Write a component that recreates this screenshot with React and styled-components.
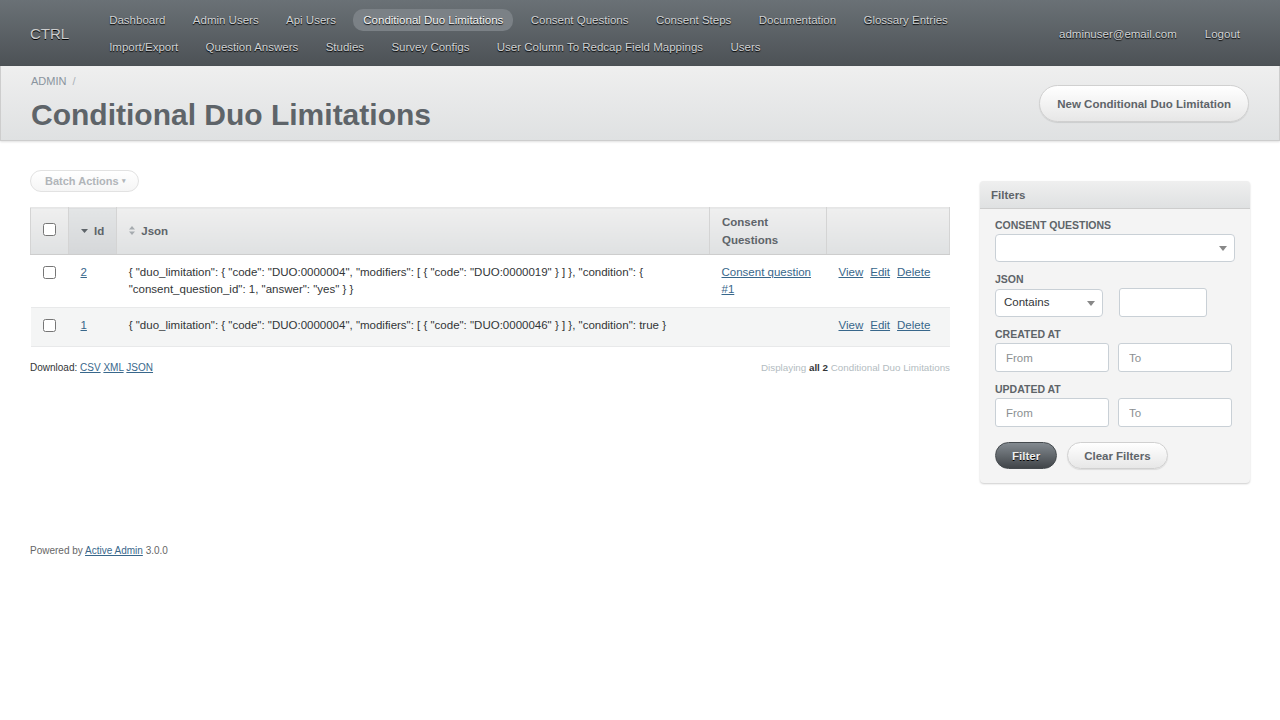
import React from 'react';
import styled, { createGlobalStyle } from 'styled-components';

const GlobalStyle = createGlobalStyle`
  html, body {
    margin: 0;
    padding: 0;
    background: #fff;
  }
  body {
    font-family: "Liberation Sans", Arial, sans-serif;
    font-size: 11.5px;
    color: #323537;
    line-height: 150%;
  }
  * { box-sizing: border-box; }
  a { color: #38678b; }
`;

const topRow = ['Dashboard', 'Admin Users', 'Api Users', 'Conditional Duo Limitations', 'Consent Questions', 'Consent Steps', 'Documentation', 'Glossary Entries'];
const bottomRow = ['Import/Export', 'Question Answers', 'Studies', 'Survey Configs', 'User Column To Redcap Field Mappings', 'Users'];

const rows = [
  {
    id: 2,
    json: '{ "duo_limitation": { "code": "DUO:0000004", "modifiers": [ { "code": "DUO:0000019" } ] }, "condition": { "consent_question_id": 1, "answer": "yes" } }',
    question: 'Consent question #1',
  },
  {
    id: 1,
    json: '{ "duo_limitation": { "code": "DUO:0000004", "modifiers": [ { "code": "DUO:0000046" } ] }, "condition": true }',
    question: null,
  },
];

export default function App() {
  return (
    <>
      <GlobalStyle />
      <Header>
        <SiteTitle>CTRL</SiteTitle>
        <Tabs>
          <TabRow>
            {topRow.map(t => (
              <Tab key={t} $current={t === 'Conditional Duo Limitations'}>{t}</Tab>
            ))}
          </TabRow>
          <TabRow>
            {bottomRow.map(t => <Tab key={t}>{t}</Tab>)}
          </TabRow>
        </Tabs>
        <UtilityNav>
          <Tab>adminuser@email.com</Tab>
          <Tab>Logout</Tab>
        </UtilityNav>
      </Header>

      <TitleBar>
        <TitleLeft>
          <Breadcrumb>ADMIN <Sep>/</Sep></Breadcrumb>
          <PageTitle>Conditional Duo Limitations</PageTitle>
        </TitleLeft>
        <ActionButton>New Conditional Duo Limitation</ActionButton>
      </TitleBar>

      <Main>
        <Content>
          <BatchButton>Batch Actions <Caret>▾</Caret></BatchButton>
          <Table>
            <thead>
              <tr>
                <Th $w="38px"><Check type="checkbox" /></Th>
                <Th $w="48px" $sorted><SortDown />Id</Th>
                <Th><SortBoth />Json</Th>
                <Th $w="117px" $wrap>Consent Questions</Th>
                <Th $w="123px"></Th>
              </tr>
            </thead>
            <tbody>
              {rows.map((r, i) => (
                <Tr key={r.id} $odd={i % 2 === 1}>
                  <Td><Check type="checkbox" /></Td>
                  <Td><a href="#">{r.id}</a></Td>
                  <Td>{r.json}</Td>
                  <Td>{r.question && <a href="#">{r.question}</a>}</Td>
                  <Td>
                    <Actions>
                      <a href="#">View</a>
                      <a href="#">Edit</a>
                      <a href="#">Delete</a>
                    </Actions>
                  </Td>
                </Tr>
              ))}
            </tbody>
          </Table>
          <IndexFooter>
            <Download>
              Download: <a href="#">CSV</a> <a href="#">XML</a> <a href="#">JSON</a>
            </Download>
            <Displaying>Displaying <b>all 2</b> Conditional Duo Limitations</Displaying>
          </IndexFooter>
        </Content>

        <Sidebar>
          <Panel>
            <PanelHeader>Filters</PanelHeader>
            <PanelBody>
              <Field>
                <Label>Consent Questions</Label>
                <Select $w="240px" $h="28px"><SelectArrow /></Select>
              </Field>
              <Field>
                <Label>Json</Label>
                <InlineRow $gap="16px">
                  <Select $w="108px" $h="28px" $down>Contains<SelectArrow /></Select>
                  <Input $w="88px" />
                </InlineRow>
              </Field>
              <Field>
                <Label>Created At</Label>
                <InlineRow $gap="9px">
                  <Input $w="114px" placeholder="From" />
                  <Input $w="114px" placeholder="To" />
                </InlineRow>
              </Field>
              <Field>
                <Label>Updated At</Label>
                <InlineRow $gap="9px">
                  <Input $w="114px" placeholder="From" />
                  <Input $w="114px" placeholder="To" />
                </InlineRow>
              </Field>
              <ButtonRow>
                <FilterButton>Filter</FilterButton>
                <ClearButton>Clear Filters</ClearButton>
              </ButtonRow>
            </PanelBody>
          </Panel>
        </Sidebar>
      </Main>

      <Footer>
        Powered by <a href="#">Active Admin</a> 3.0.0
      </Footer>
    </>
  );
}

const SortDown = () => (
  <SortIcon width="7" height="4" viewBox="0 0 7 4">
    <path d="M0 0 L7 0 L3.5 4 Z" fill="#5e6469" />
  </SortIcon>
);

const SortBoth = () => (
  <SortIcon width="6" height="9" viewBox="0 0 6 9">
    <path d="M0 3.5 L6 3.5 L3 0 Z" fill="#a6abaf" />
    <path d="M0 5.5 L6 5.5 L3 9 Z" fill="#a6abaf" />
  </SortIcon>
);

const SelectArrow = () => (
  <Arrow width="8" height="5" viewBox="0 0 8 5">
    <path d="M0 0 L8 0 L4 5 Z" fill="#888" />
  </Arrow>
);

const Header = styled.div`
  height: 66px;
  display: flex;
  align-items: center;
  padding: 2px 30px 0;
  background: linear-gradient(180deg, #6a7176 0%, #4d5256 100%);
  border-bottom: 1px solid #4c5155;
`;

const SiteTitle = styled.h1`
  margin: 0 30px 0 0;
  font-size: 15px;
  font-weight: normal;
  color: #cdcdcd;
  text-shadow: 0 1px 0 #000;
  line-height: 1;
`;

const Tabs = styled.div`
  flex: 1;
  display: flex;
  flex-direction: column;
  gap: 5px;
`;

const TabRow = styled.div`
  display: flex;
  gap: 7.4px;
`;

const Tab = styled.span`
  display: inline-block;
  height: 22px;
  line-height: 22px;
  padding: 0 10px;
  border-radius: 10px;
  text-shadow: 0 1px 1px #000;
  white-space: nowrap;
  background: ${p => (p.$current ? '#7b8186' : 'transparent')};
  color: ${p => (p.$current ? '#f4f4f4' : '#d0d2d4')};
`;

const UtilityNav = styled.div`
  display: flex;
  gap: 8px;
`;

const TitleBar = styled.div`
  height: 75px;
  display: flex;
  align-items: center;
  justify-content: space-between;
  padding: 0 30px;
  background: linear-gradient(180deg, #efefef 0%, #dfe1e2 100%);
  border-bottom: 1px solid #cdcdcd;
  border-left: 1px solid #cdcdcd;
  border-right: 1px solid #cdcdcd;
  box-shadow: 0 1px 2px rgba(0, 0, 0, 0.12);
`;

const TitleLeft = styled.div`
  display: flex;
  flex-direction: column;
  align-self: flex-start;
  padding-top: 8px;
`;

const Breadcrumb = styled.div`
  font-size: 11px;
  color: #8a949e;
  line-height: 14px;
`;

const Sep = styled.span`
  margin-left: 3px;
  color: #aab1b7;
`;

const PageTitle = styled.h2`
  margin: 9px 0 0;
  font-size: 30px;
  line-height: 36px;
  font-weight: bold;
  color: #5e6469;
`;

const ActionButton = styled.button`
  height: 37px;
  padding: 0 17px;
  border-radius: 200px;
  border: 1px solid #d0d0d0;
  background: linear-gradient(180deg, #ffffff 0%, #e7e7e7 100%);
  box-shadow: 0 1px 1px rgba(0, 0, 0, 0.1);
  font-family: inherit;
  font-size: 11.5px;
  font-weight: bold;
  color: #5e6469;
  margin-top: 1px;
`;

const Main = styled.div`
  display: flex;
  padding: 29px 30px 0;
  align-items: flex-start;
`;

const Content = styled.div`
  flex: 1;
  min-width: 0;
`;

const BatchButton = styled.button`
  height: 22px;
  padding: 0 12px 0 14px;
  border-radius: 200px;
  border: 1px solid #e2e2e2;
  background: linear-gradient(180deg, #ffffff 0%, #f5f5f5 100%);
  font-family: inherit;
  font-size: 11px;
  font-weight: bold;
  color: #b1b5b9;
  display: flex;
  align-items: center;
`;

const Caret = styled.span`
  font-size: 7px;
  margin-left: 3px;
`;

const Table = styled.table`
  width: 100%;
  margin-top: 15px;
  border-collapse: collapse;
  border-spacing: 0;
`;

const Th = styled.th`
  width: ${p => p.$w || 'auto'};
  height: 46px;
  padding: 5px 12px;
  text-align: left;
  vertical-align: middle;
  font-size: 11.5px;
  font-weight: bold;
  line-height: 18px;
  color: #5e6469;
  background: ${p =>
    p.$sorted
      ? 'linear-gradient(180deg, #e3e5e6 0%, #d5d7d9 100%)'
      : 'linear-gradient(180deg, #efefef 0%, #dfe1e2 100%)'};
  border-top: 1px solid #e6e6e6;
  border-bottom: 1px solid #cdcdcd;
  border-left: 1px solid #ffffff;
  border-right: 1px solid #d4d4d4;
  white-space: ${p => (p.$wrap ? 'normal' : 'nowrap')};

  &:first-child { border-left: 1px solid #d4d4d4; }
`;

const SortIcon = styled.svg`
  margin-right: 6px;
  vertical-align: middle;
  position: relative;
  top: -1px;
`;

const Tr = styled.tr`
  background: ${p => (p.$odd ? '#f4f5f5' : '#fff')};
  border-bottom: 1px solid #e8e9ea;
`;

const Td = styled.td`
  padding: 9px 12px 9px;
  vertical-align: top;
  line-height: 17px;
  font-size: 11.5px;
`;

const Check = styled.input`
  margin: 2px 0 0;
  width: 13px;
  height: 13px;
`;

const Actions = styled.div`
  display: flex;
  gap: 7px;
  white-space: nowrap;
`;

const IndexFooter = styled.div`
  display: flex;
  justify-content: space-between;
  margin-top: 13px;
  font-size: 10px;
  line-height: 16px;
`;

const Download = styled.div`
  color: #323537;
`;

const Displaying = styled.div`
  color: #b3bcc1;
  font-size: 9.8px;

  b { color: #323537; }
`;

const Sidebar = styled.div`
  width: 270px;
  margin-left: 30px;
  margin-top: 11px;
`;

const Panel = styled.div`
  background: #f4f4f4;
  border-radius: 4px;
  box-shadow: 0 1px 2px rgba(0, 0, 0, 0.2);
  overflow: hidden;
`;

const PanelHeader = styled.h3`
  margin: 0;
  height: 28px;
  line-height: 29px;
  padding: 0 11px;
  font-size: 11.5px;
  font-weight: bold;
  color: #5e6469;
  background: linear-gradient(180deg, #efefef 0%, #dfe1e2 100%);
  border-bottom: 1px solid #cdcdcd;
`;

const PanelBody = styled.div`
  padding: 9px 15px 14px;
`;

const Field = styled.div`
  margin-bottom: 10px;
`;

const Label = styled.div`
  font-size: 10.5px;
  font-weight: bold;
  text-transform: uppercase;
  color: #5e6469;
  line-height: 14px;
  margin-bottom: 2px;
`;

const InlineRow = styled.div`
  display: flex;
  gap: ${p => p.$gap};
  align-items: flex-start;
`;

const Select = styled.div`
  position: relative;
  width: ${p => p.$w};
  height: ${p => p.$h || '27px'};
  margin-top: ${p => (p.$down ? '1px' : '0')};
  border: 1px solid #c9d0d6;
  border-radius: 4px;
  background: #fff;
  padding: 0 8px;
  display: flex;
  align-items: center;
  font-size: 11.5px;
  color: #323537;
`;

const Arrow = styled.svg`
  position: absolute;
  right: 7px;
  top: 50%;
  margin-top: -2px;
`;

const Input = styled.input`
  width: ${p => p.$w};
  height: 29px;
  border: 1px solid #c9d0d6;
  border-radius: 3px;
  background: #fff;
  padding: 0 10px;
  font-family: inherit;
  font-size: 11.5px;
  color: #323537;

  &::placeholder { color: #8b8f92; }
`;

const ButtonRow = styled.div`
  display: flex;
  gap: 10px;
  margin-top: 15px;
`;

const FilterButton = styled.button`
  height: 27px;
  padding: 0 16px;
  border-radius: 200px;
  border: 1px solid #454a4e;
  background: linear-gradient(180deg, #838a90 0%, #414549 100%);
  color: #efefef;
  text-shadow: 0 1px 0 #000;
  font-family: inherit;
  font-size: 11.5px;
  font-weight: bold;
`;

const ClearButton = styled.button`
  height: 27px;
  padding: 0 16px;
  border-radius: 200px;
  border: 1px solid #d0d0d0;
  background: linear-gradient(180deg, #ffffff 0%, #e7e7e7 100%);
  box-shadow: 0 1px 1px rgba(0, 0, 0, 0.1);
  color: #5e6469;
  font-family: inherit;
  font-size: 11.5px;
  font-weight: bold;
`;

const Footer = styled.div`
  padding: 60px 30px 30px;
  font-size: 10px;
  color: #666;
  line-height: 16px;
`;
